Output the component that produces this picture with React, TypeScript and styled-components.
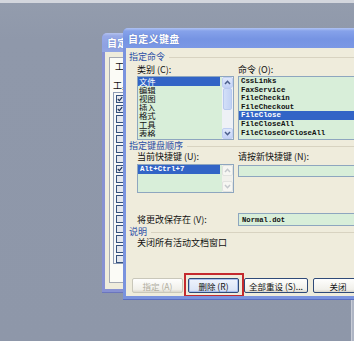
import React from 'react';
import styled, { createGlobalStyle } from 'styled-components';

const Global = createGlobalStyle`
  html, body { margin: 0; padding: 0; }
  body {
    width: 354px; height: 341px; overflow: hidden;
    background: #8f98aa;
    font-family: "Noto Sans CJK SC", "Liberation Sans", sans-serif;
  }
`;

const CJK = `"Noto Sans CJK SC", "Liberation Sans", sans-serif`;
const MONO = `"Liberation Mono", "Noto Sans CJK SC", monospace`;

const Desktop = styled.div`
  position: relative;
  width: 354px;
  height: 341px;
  overflow: hidden;
  background: linear-gradient(#d3d6dd 0, #d3d6dd 3px, #939cad 3px, #8f98aa 40px, #8e97a9 100%);
`;

const EdgeStrip = styled.div`
  position: absolute;
  left: 351px;
  top: 300px;
  width: 3px;
  height: 41px;
  background: #aeb5c4;
  border-left: 1px solid #c8ccd6;
`;

const Window = styled.div<{ $left: number; $top: number; $width: number; $height: number; $z: number; $frame: string; $bottom: string }>`
  position: absolute;
  left: ${p => p.$left}px;
  top: ${p => p.$top}px;
  width: ${p => p.$width}px;
  height: ${p => p.$height}px;
  z-index: ${p => p.$z};
  box-sizing: border-box;
  display: flex;
  flex-direction: column;
  padding: 0 3px 3px 3px;
  background: ${p => p.$frame};
  border-bottom: 1px solid ${p => p.$bottom};
  border-radius: 5px 5px 0 0;
`;

const TitleBar = styled.div<{ $h: number; $inactive?: boolean }>`
  height: ${p => p.$h}px;
  margin: 0 -3px;
  padding-left: 5px;
  display: flex;
  align-items: center;
  border-radius: 5px 5px 0 0;
  background: ${p =>
    p.$inactive
      ? 'linear-gradient(#b4c2ee 0, #97a9e6 3px, #8ea1e2 70%, #93a6e4 100%)'
      : 'linear-gradient(#b0c3f3 0, #86a2ea 3px, #7694e3 55%, #7b98e5 100%)'};
  color: #fff;
  font-family: ${CJK};
  font-size: 10px;
  font-weight: 700;
  letter-spacing: 0.3px;
  text-shadow: 0 0 1px rgba(40, 60, 130, 0.5);
  white-space: nowrap;
  overflow: hidden;
`;

const Body = styled.div`
  flex: 1;
  background: #efecdc;
  display: flex;
  flex-direction: column;
  font-family: ${CJK};
  font-size: 9px;
  color: #111;
  overflow: hidden;
`;

/* ---------- front dialog ---------- */

const GroupLabel = styled.div<{ $mt: number }>`
  margin-top: ${p => p.$mt}px;
  padding-left: 3px;
  height: 10px;
  line-height: 10px;
  display: flex;
  align-items: center;
  gap: 4px;
  color: #2b4ea6;
  white-space: nowrap;
  &::after {
    content: '';
    flex: 1;
    height: 1px;
    background: #d8d3c1;
  }
`;

const FieldLabel = styled.div<{ $mt?: number }>`
  margin-top: ${p => p.$mt ?? 0}px;
  height: 10px;
  line-height: 10px;
  white-space: nowrap;
`;

const Columns = styled.div<{ $mt: number }>`
  margin-top: ${p => p.$mt}px;
  margin-left: 11px;
  display: grid;
  grid-template-columns: 97px 1fr;
  column-gap: 4px;
  align-items: start;
`;

const Col = styled.div`
  display: flex;
  flex-direction: column;
  min-width: 0;
`;

const ListBox = styled.div<{ $h: number; $mt: number }>`
  margin-top: ${p => p.$mt}px;
  height: ${p => p.$h}px;
  box-sizing: border-box;
  border: 1px solid #8ea6bf;
  background: #d8eed9;
  display: flex;
  overflow: hidden;
`;

const Items = styled.div`
  flex: 1;
  min-width: 0;
  display: flex;
  flex-direction: column;
  padding-right: 2px;
`;

const Item = styled.div<{ $selected?: boolean; $mono?: boolean }>`
  height: 8.6px;
  line-height: 8.6px;
  overflow: hidden;
  padding-left: ${p => (p.$mono ? 2 : 1)}px;
  white-space: nowrap;
  font-family: ${p => (p.$mono ? MONO : CJK)};
  font-size: ${p => (p.$mono ? '7.4px' : '8.4px')};
  font-weight: ${p => (p.$mono ? 700 : 400)};
  background: ${p => (p.$selected ? '#3264c6' : 'transparent')};
  color: ${p => (p.$selected ? '#fff' : '#111')};
`;

const Scrollbar = styled.div<{ $disabled?: boolean }>`
  width: 11px;
  display: flex;
  flex-direction: column;
  background: ${p => (p.$disabled ? '#f1f1ec' : '#eef1f6')};
`;

const ScrollButton = styled.div<{ $disabled?: boolean }>`
  height: 11px;
  box-sizing: border-box;
  border: 1px solid ${p => (p.$disabled ? '#e2e3e0' : '#c0cff2')};
  border-radius: 2px;
  background: ${p => (p.$disabled ? '#f6f6f2' : 'linear-gradient(#dfe8fb, #c3d2f6)')};
  display: flex;
  align-items: center;
  justify-content: center;
  color: ${p => (p.$disabled ? '#c4c8cc' : '#4b5f8c')};
`;

const Track = styled.div`
  flex: 1;
  display: flex;
  flex-direction: column;
`;

const Thumb = styled.div`
  height: 20px;
  margin: 0 1px;
  border-radius: 2px;
  background: linear-gradient(90deg, #d3dff8, #c2d2f4);
  border: 1px solid #b8c9ef;
`;

const TextBox = styled.div<{ $h: number; $mt: number }>`
  margin-top: ${p => p.$mt}px;
  height: ${p => p.$h}px;
  box-sizing: border-box;
  border: 1px solid #8ea6bf;
  background: #d8eed9;
  display: flex;
  align-items: center;
  padding-left: 3px;
  font-family: ${MONO};
  font-size: 7.2px;
  font-weight: 700;
  white-space: nowrap;
`;

const SaveRow = styled.div`
  margin-top: 20px;
  margin-left: 11px;
  display: grid;
  grid-template-columns: 97px 1fr;
  column-gap: 4px;
  align-items: center;
`;

const Description = styled.div`
  margin-top: 1px;
  margin-left: 11px;
  height: 10px;
  line-height: 10px;
  white-space: nowrap;
`;

const ButtonRow = styled.div`
  margin-top: 30px;
  padding-left: 6px;
  display: flex;
  gap: 5px;
  align-items: center;
`;

const Button = styled.div<{ $w: number; $disabled?: boolean; $default?: boolean }>`
  width: ${p => p.$w}px;
  height: 15px;
  flex: none;
  box-sizing: border-box;
  border: 1px solid ${p => (p.$disabled ? '#c9c7ba' : '#2f4a78')};
  border-radius: 2px;
  background: ${p =>
    p.$default
      ? 'linear-gradient(#eef3fd, #dde6f7 80%, #c9d5ef)'
      : 'linear-gradient(#fefefd, #f1f0ea 80%, #dcd8cc)'};
  box-shadow: ${p => (p.$default ? 'inset 0 0 0 1px #a9c0ee' : 'none')};
  display: flex;
  align-items: center;
  justify-content: center;
  font-size: 8.5px;
  white-space: nowrap;
  color: ${p => (p.$disabled ? '#b0ad9e' : '#111')};
`;

const Highlight = styled.div`
  position: relative;
  display: flex;
  &::after {
    content: '';
    position: absolute;
    left: -4px;
    right: -5px;
    top: -5px;
    bottom: -4px;
    border: 2px solid #c42a2e;
    pointer-events: none;
  }
`;

/* ---------- back dialog ---------- */

const BackBody = styled(Body)`
  padding: 5px 0 0 4px;
`;

const Tab = styled.div`
  width: 60px;
  height: 17px;
  box-sizing: border-box;
  border: 1px solid #a6aab4;
  border-bottom: none;
  background: #fbfbf6;
  padding: 4px 0 0 5px;
  line-height: 10px;
  white-space: nowrap;
  position: relative;
  z-index: 1;
  margin-bottom: -1px;
`;

const TabPanel = styled.div`
  height: 210px;
  box-sizing: border-box;
  border: 1px solid #a6aab4;
  background: #fbfbf6;
  padding: 7px 0 0 3px;
  display: flex;
  flex-direction: column;
`;

const CheckList = styled.div`
  margin-top: 1px;
  height: 172px;
  box-sizing: border-box;
  border: 1px solid #8c9bb4;
  background: #f7f8f8;
  padding: 2px 0 0 2px;
  display: flex;
  flex-direction: column;
  gap: 2.2px;
`;

const Check = styled.div`
  width: 8px;
  height: 8px;
  box-sizing: border-box;
  border: 1px solid #35517e;
  background: #e4e8ee;
  display: flex;
  align-items: center;
  justify-content: center;
`;

const Chevron = ({ up }: { up?: boolean }) => (
  <svg width="7" height="5" viewBox="0 0 7 5">
    <path
      d={up ? 'M1 4 L3.5 1.3 L6 4' : 'M1 1 L3.5 3.7 L6 1'}
      fill="none"
      stroke="currentColor"
      strokeWidth="1.5"
    />
  </svg>
);

const CheckMark = () => (
  <svg width="6" height="6" viewBox="0 0 6 6">
    <path d="M0.8 3 L2.4 4.6 L5.2 1.2" fill="none" stroke="#21355c" strokeWidth="1.2" />
  </svg>
);

const categories = ['文件', '编辑', '视图', '插入', '格式', '工具', '表格'];
const commands = ['CssLinks', 'FaxService', 'FileCheckin', 'FileCheckout', 'FileClose', 'FileCloseAll', 'FileCloseOrCloseAll'];
const checks = [true, true, false, false, false, false, false, true, false, false, false, false, false, false, false, false, false];

export default function App() {
  return (
    <Desktop>
      <Global />
      <Window $left={102} $top={33} $width={110} $height={260} $z={1} $frame="#8791d2" $bottom="#6b76bd">
        <TitleBar $h={19} $inactive>自定义</TitleBar>
        <BackBody>
          <Tab>工具栏(B)</Tab>
          <TabPanel>
            <FieldLabel>工具栏(A):</FieldLabel>
            <CheckList>
              {checks.map((c, i) => (
                <Check key={i}>{c && <CheckMark />}</Check>
              ))}
            </CheckList>
          </TabPanel>
        </BackBody>
      </Window>

      <Window $left={123} $top={28} $width={240} $height={272} $z={2} $frame="#7a93de" $bottom="#5b6ec0">
        <TitleBar $h={20}>自定义键盘</TitleBar>
        <Body>
          <GroupLabel $mt={4}>指定命令</GroupLabel>
          <Columns $mt={3}>
            <Col>
              <FieldLabel>类别 (C):</FieldLabel>
              <ListBox $h={64} $mt={1}>
                <Items>
                  {categories.map((c, i) => (
                    <Item key={c} $selected={i === 0}>{c}</Item>
                  ))}
                </Items>
                <Scrollbar>
                  <ScrollButton><Chevron up /></ScrollButton>
                  <Track><Thumb /></Track>
                  <ScrollButton><Chevron /></ScrollButton>
                </Scrollbar>
              </ListBox>
            </Col>
            <Col>
              <FieldLabel>命令 (O):</FieldLabel>
              <ListBox $h={64} $mt={1}>
                <Items>
                  {commands.map(c => (
                    <Item key={c} $mono $selected={c === 'FileClose'}>{c}</Item>
                  ))}
                </Items>
              </ListBox>
            </Col>
          </Columns>

          <GroupLabel $mt={1}>指定键盘顺序</GroupLabel>
          <Columns $mt={1}>
            <Col>
              <FieldLabel>当前快捷键 (U):</FieldLabel>
              <ListBox $h={29} $mt={2}>
                <Items>
                  <Item $mono $selected>Alt+Ctrl+7</Item>
                </Items>
                <Scrollbar $disabled>
                  <ScrollButton $disabled><Chevron up /></ScrollButton>
                  <Track />
                  <ScrollButton $disabled><Chevron /></ScrollButton>
                </Scrollbar>
              </ListBox>
            </Col>
            <Col>
              <FieldLabel>请按新快捷键 (N):</FieldLabel>
              <TextBox $h={12} $mt={3} />
            </Col>
          </Columns>

          <SaveRow>
            <FieldLabel>将更改保存在 (V):</FieldLabel>
            <TextBox $h={13} $mt={0}>Normal.dot</TextBox>
          </SaveRow>

          <GroupLabel $mt={1}>说明</GroupLabel>
          <Description>关闭所有活动文档窗口</Description>

          <ButtonRow>
            <Button $w={51} $disabled>指定 (A)</Button>
            <Highlight>
              <Button $w={51} $default>删除 (R)</Button>
            </Highlight>
            <Button $w={64}>全部重设 (S)...</Button>
            <Button $w={50}>关闭</Button>
          </ButtonRow>
        </Body>
      </Window>
      <EdgeStrip />
    </Desktop>
  );
}
